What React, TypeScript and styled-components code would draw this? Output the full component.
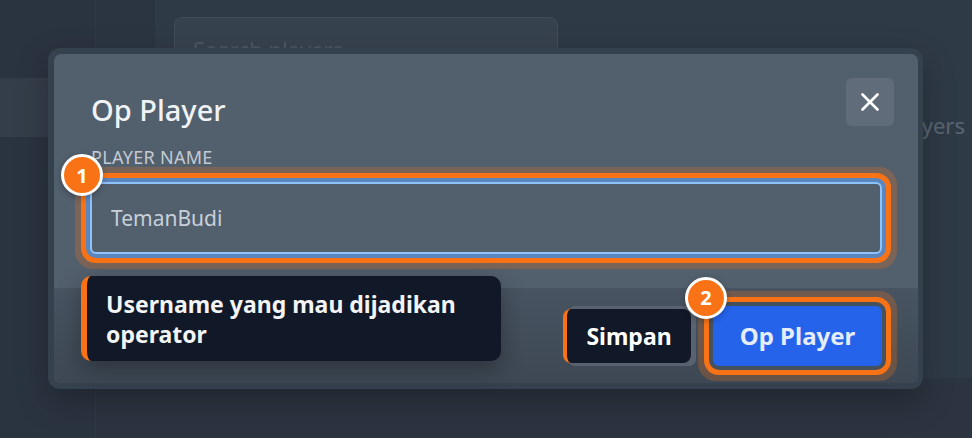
import React from 'react';
import styled, { createGlobalStyle } from 'styled-components';

const GlobalStyle = createGlobalStyle`
  html, body {
    margin: 0;
    padding: 0;
  }
  body {
    width: 972px;
    height: 438px;
    overflow: hidden;
    background: #2b3440;
    font-family: "Noto Sans", "Open Sans", sans-serif;
  }
`;

const App = () => {
  return (
    <>
      <GlobalStyle />
      <Page>
        <Sidebar>
          <NavItem />
        </Sidebar>
        <Main>
          <TopArea>
            <SubColumn />
            <Content>
              <SearchBox>Search players</SearchBox>
              <CountRow>Players</CountRow>
            </Content>
          </TopArea>
        </Main>
        <OpPlayerDialog />
      </Page>
    </>
  );
};

const OpPlayerDialog = () => {
  return (
    <DialogFrame>
      <Panel>
        <Header>
          <Title>Op Player</Title>
          <CloseButton aria-label="close">
            <svg width="18" height="18" viewBox="0 0 18 18">
              <path d="M1.5 1.5 L16.5 16.5 M16.5 1.5 L1.5 16.5" stroke="#ffffff" strokeWidth="2.6" strokeLinecap="round" />
            </svg>
          </CloseButton>
        </Header>
        <Body>
          <Label>Player Name</Label>
          <InputWrap>
            <StepBadge>1</StepBadge>
            <NameInput defaultValue="TemanBudi" />
          </InputWrap>
        </Body>
        <Footer>
          <SecondaryButton>
            <HintChip>Simpan</HintChip>
          </SecondaryButton>
          <PrimaryWrap>
            <StepBadge $left={-28} $top={-29}>2</StepBadge>
            <PrimaryButton>Op Player</PrimaryButton>
          </PrimaryWrap>
        </Footer>
        <Tooltip>Username yang mau dijadikan operator</Tooltip>
      </Panel>
    </DialogFrame>
  );
};

const Page = styled.div`
  position: relative;
  display: flex;
  width: 972px;
  height: 438px;
  overflow: hidden;
`;

const Sidebar = styled.aside`
  width: 96px;
  flex-shrink: 0;
  box-sizing: border-box;
  padding-top: 78px;
  background: #2a3440;
  border-right: 1px solid #303a46;
`;

const NavItem = styled.div`
  height: 59px;
  background: #343e4a;
`;

const Main = styled.div`
  flex: 1;
  display: flex;
  flex-direction: column;
`;

const TopArea = styled.div`
  height: 378px;
  display: flex;
`;

const SubColumn = styled.div`
  width: 59px;
  background: #2b3541;
`;

const Content = styled.div`
  flex: 1;
  box-sizing: border-box;
  padding: 17px 7px 0 19px;
  display: flex;
  flex-direction: column;
  background: #2f3a47;
`;

const SearchBox = styled.div`
  width: 384px;
  height: 62px;
  box-sizing: border-box;
  padding: 16px 18px;
  border: 1px solid #414c59;
  border-radius: 8px;
  background: #37424f;
  color: #4c5764;
  font-size: 22px;
  line-height: 30px;
`;

const CountRow = styled.div`
  margin-top: 31px;
  display: flex;
  justify-content: flex-end;
  color: #5b6672;
  font-size: 22px;
  line-height: 30px;
`;

const DialogFrame = styled.div`
  position: absolute;
  left: 48px;
  top: 48px;
  width: 875px;
  height: 341px;
  box-sizing: border-box;
  padding: 6px 5px 6px 6px;
  border-radius: 12px;
  background: #36414e;
  box-shadow: 0 12px 32px rgba(0, 0, 0, 0.25);
`;

const Panel = styled.div`
  position: relative;
  height: 100%;
  display: flex;
  flex-direction: column;
  border-radius: 7px;
  background: #525f6d;
`;

const Header = styled.div`
  display: flex;
  justify-content: space-between;
  align-items: flex-start;
  padding: 24px 24px 0 37px;
`;

const Title = styled.h2`
  margin: 14px 0 0;
  color: #f0f3f6;
  font-size: 29px;
  font-weight: 500;
  line-height: 36px;
`;

const CloseButton = styled.button`
  width: 48px;
  height: 48px;
  display: flex;
  align-items: center;
  justify-content: center;
  padding: 0;
  border: none;
  border-radius: 6px;
  background: #606c7a;
  cursor: pointer;
`;

const Body = styled.div`
  display: flex;
  flex-direction: column;
  padding: 0 36px;
`;

const Label = styled.label`
  margin-top: 17px;
  padding-left: 1px;
  color: #c3cad3;
  font-size: 18px;
  line-height: 24px;
  letter-spacing: 0.3px;
  text-transform: uppercase;
`;

const InputWrap = styled.div`
  position: relative;
  margin-top: 13px;
`;

const StepBadge = styled.div<{ $left?: number; $top?: number }>`
  position: absolute;
  left: ${(p) => p.$left ?? -29}px;
  top: ${(p) => p.$top ?? -28}px;
  z-index: 3;
  width: 42px;
  height: 42px;
  box-sizing: border-box;
  display: flex;
  align-items: center;
  justify-content: center;
  border: 3px solid #ffffff;
  border-radius: 50%;
  background: #f97316;
  color: #ffffff;
  font-size: 20px;
  font-weight: 700;
  box-shadow: 0 2px 6px rgba(0, 0, 0, 0.25);
`;

const NameInput = styled.input`
  width: 100%;
  height: 72px;
  box-sizing: border-box;
  padding: 0 19px;
  border: 2px solid #8fc1fa;
  border-radius: 6px;
  background: #525f6d;
  color: #c8d0da;
  font-family: "Noto Sans", "Open Sans", sans-serif;
  font-size: 21px;
  outline: none;
  box-shadow: 0 0 0 4px #5b86bd, 0 0 0 9px #f97316, 0 0 0 15px rgba(249, 115, 22, 0.24);
`;

const Footer = styled.div`
  margin-top: auto;
  height: 95px;
  box-sizing: border-box;
  display: flex;
  justify-content: flex-end;
  align-items: center;
  gap: 17px;
  padding: 0 36px;
  border-radius: 0 0 7px 7px;
  background: linear-gradient(180deg, #485461 0%, #3d4854 100%);
`;

const SecondaryButton = styled.div`
  position: relative;
  width: 128px;
  height: 60px;
  border-radius: 7px;
  background: #58636f;
`;

const HintChip = styled.div`
  position: absolute;
  left: -5px;
  right: 5px;
  top: 3px;
  bottom: 3px;
  display: flex;
  align-items: center;
  justify-content: center;
  border-left: 4px solid #f97316;
  border-radius: 8px;
  background: #111827;
  color: #ffffff;
  font-size: 23px;
  font-weight: 700;
`;

const PrimaryWrap = styled.div`
  position: relative;
`;

const PrimaryButton = styled.button`
  width: 169px;
  height: 60px;
  border: none;
  border-radius: 6px;
  background: #2563eb;
  color: #e5edfb;
  font-family: "Noto Sans", "Open Sans", sans-serif;
  font-size: 24px;
  font-weight: 700;
  box-shadow: 0 0 0 4px #46515e, 0 0 0 9px #f97316, 0 0 0 15px rgba(249, 115, 22, 0.24);
`;

const Tooltip = styled.div`
  position: absolute;
  left: 27px;
  top: 222px;
  width: 420px;
  box-sizing: border-box;
  padding: 13px 24px 12px 19px;
  border-left: 6px solid #f97316;
  border-radius: 10px;
  background: #111827;
  color: #f3f4f6;
  font-size: 23px;
  font-weight: 700;
  line-height: 30px;
  box-shadow: 0 8px 24px rgba(0, 0, 0, 0.3);
`;

export default App;
